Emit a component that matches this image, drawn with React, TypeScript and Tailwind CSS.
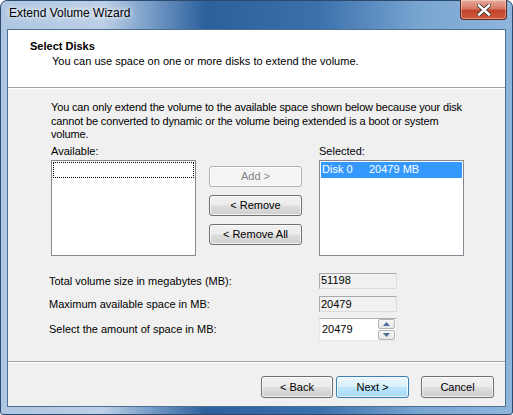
import React from 'react';

const font = { fontFamily: '"Liberation Sans", Arial, sans-serif' };

function WinButton({
  children,
  variant = 'normal',
  className = '',
}: {
  children: React.ReactNode;
  variant?: 'normal' | 'default' | 'disabled';
  className?: string;
}) {
  const styles =
    variant === 'default'
      ? 'border-[#3c7fb1] bg-[linear-gradient(180deg,#eaf6fd_0%,#d9f0fc_48%,#bee6fd_52%,#a7d9f5_100%)] text-black'
      : variant === 'disabled'
        ? 'border-[#adb2b5] bg-[#f4f4f4] text-[#838383]'
        : 'border-[#707070] bg-[linear-gradient(180deg,#f2f2f2_0%,#ebebeb_48%,#dddddd_52%,#cfcfcf_100%)] text-black';
  return (
    <div
      className={`flex items-center justify-center rounded-[3px] border text-[11px] shadow-[inset_0_0_0_1px_rgba(255,255,255,0.7)] ${styles} ${className}`}
    >
      {children}
    </div>
  );
}

function ReadOnlyBox({ value }: { value: string }) {
  return (
    <div className="flex h-[16px] w-[78px] items-center border border-[#dcdcdc] border-t-[#a9a9a9] border-l-[#a9a9a9] bg-[#f0f0f0] pl-[1px] text-[11px] leading-none">
      {value}
    </div>
  );
}

function SpinArrow({ up }: { up?: boolean }) {
  return (
    <div className="flex h-[10px] w-[17px] items-center justify-center rounded-[2px] border border-[#b5b5b5] bg-[linear-gradient(180deg,#f6f6f6_0%,#e6e6e6_100%)]">
      <svg width="7" height="4" viewBox="0 0 7 4">
        {up ? <polygon points="0,4 7,4 3.5,0" fill="#4d6d99" /> : <polygon points="0,0 7,0 3.5,4" fill="#4d6d99" />}
      </svg>
    </div>
  );
}

export default function App() {
  return (
    <div className="h-[415px] w-[513px] bg-white" style={font}>
      <div className="flex h-[415px] w-[513px] flex-col rounded-t-[7px] rounded-b-[3px] border border-[#2b4a6d] bg-[linear-gradient(90deg,#aec6e2_0%,#bccfe6_20%,#7fa3cc_28%,#2c609c_40%,#3a70ac_62%,#79a5d1_82%,#8fb5dc_100%)] px-[6px] pb-[7px]">
        {/* title bar */}
        <div className="relative flex h-[28px] shrink-0 items-center">
          <span className="pl-[2px] pb-[5px] text-[12px] text-black [text-shadow:0_0_8px_#ffffff,0_0_4px_#ffffff]">
            Extend Volume Wizard
          </span>
          <div className="absolute right-[-1px] top-[-1px] flex h-[20px] w-[47px] items-center justify-center rounded-b-[4px] border border-[#5b2a22] border-t-0 bg-[linear-gradient(180deg,#e9a99b_0%,#d77a66_45%,#c2432b_55%,#d0593c_100%)] shadow-[inset_0_0_0_1px_rgba(255,255,255,0.35)]">
            <svg width="14" height="12" viewBox="0 0 14 12">
              <path d="M2 1.5 L12 10.5 M12 1.5 L2 10.5" stroke="#3b3b3b" strokeWidth="4.2" strokeLinecap="square" />
              <path d="M2 1.5 L12 10.5 M12 1.5 L2 10.5" stroke="#ffffff" strokeWidth="2.4" strokeLinecap="square" />
            </svg>
          </div>
        </div>

        {/* client */}
        <div className="flex flex-1 flex-col border border-[#4d6f94] bg-[#f0f0f0] text-black">
          {/* header */}
          <div className="h-[58px] shrink-0 border-b border-[#a0a0a0] bg-white pl-[22px] pt-[10px]">
            <div className="text-[11px] font-bold leading-[13px]">Select Disks</div>
            <div className="pl-[22px] pt-[2px] text-[11px] leading-[13px]">
              You can use space on one or more disks to extend the volume.
            </div>
          </div>
          <div className="h-px shrink-0 bg-white" />

          {/* body */}
          <div className="flex-1 pl-[43px] pt-[12px]">
            <p className="whitespace-nowrap text-[11px] leading-[13.5px] tracking-[-0.15px]">
              You can only extend the volume to the available space shown below because your disk
              <br />
              cannot be converted to dynamic or the volume being extended is a boot or system
              <br />
              volume.
            </p>

            <div className="mt-[2px] flex">
              <div className="flex w-[145px] flex-col">
                <div className="h-[16px] text-[11px] leading-[14px]">Available:</div>
                <div className="h-[96px] border border-[#828790] bg-white p-[1px]">
                  <div className="h-[16px] border border-dotted border-black" />
                </div>
              </div>

              <div className="ml-[13px] flex w-[93px] flex-col gap-[8px] pt-[22px]">
                <WinButton variant="disabled" className="h-[21px]">
                  Add &gt;
                </WinButton>
                <WinButton className="h-[21px]">&lt; Remove</WinButton>
                <WinButton className="h-[21px]">&lt; Remove All</WinButton>
              </div>

              <div className="ml-[17px] flex w-[145px] flex-col">
                <div className="h-[16px] text-[11px] leading-[14px]">Selected:</div>
                <div className="h-[96px] border border-[#828790] bg-white p-[1px]">
                  <div className="flex h-[16px] items-center bg-[#3399ff] pl-[1px] text-[11px] text-white">
                    <span className="w-[47px]">Disk 0</span>
                    <span>20479 MB</span>
                  </div>
                </div>
              </div>
            </div>

            <div className="ml-[-2px] mt-[17px] flex flex-col gap-[7px] text-[11px]">
              <div className="flex items-center">
                <span className="w-[270px]">Total volume size in megabytes (MB):</span>
                <ReadOnlyBox value="51198" />
              </div>
              <div className="flex items-center">
                <span className="w-[270px]">Maximum available space in MB:</span>
                <ReadOnlyBox value="20479" />
              </div>
              <div className="-mt-[2px] flex items-center">
                <span className="w-[270px]">Select the amount of space in MB:</span>
                <div className="flex h-[23px] w-[78px] items-center border border-[#e3e9ef] border-t-[#abadb3] bg-white pl-[2px]">
                  <span className="flex-1">20479</span>
                  <div className="mr-[1px] flex flex-col gap-px">
                    <SpinArrow up />
                    <SpinArrow />
                  </div>
                </div>
              </div>
            </div>
          </div>

          {/* footer */}
          <div className="h-px shrink-0 bg-[#a0a0a0]" />
          <div className="flex h-[44px] shrink-0 justify-end border-t border-white pr-[11px] pt-[13px]">
            <WinButton className="h-[22px] w-[72px]">&lt; Back</WinButton>
            <WinButton variant="default" className="ml-[3px] h-[22px] w-[73px]">
              Next &gt;
            </WinButton>
            <WinButton className="ml-[12px] h-[22px] w-[73px]">Cancel</WinButton>
          </div>
        </div>
      </div>
    </div>
  );
}
